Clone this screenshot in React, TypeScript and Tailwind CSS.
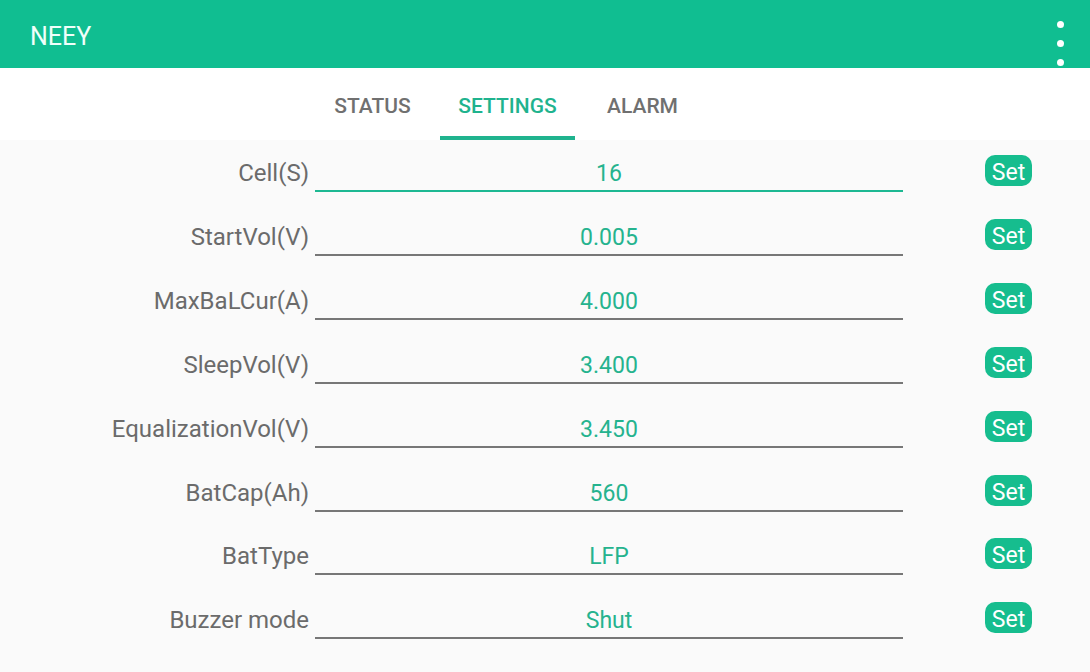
import React from 'react';

const rows = [
  { label: 'Cell(S)', value: '16', active: true, h: 'h-[64px]' },
  { label: 'StartVol(V)', value: '0.005', h: 'h-[64px]' },
  { label: 'MaxBaLCur(A)', value: '4.000', h: 'h-[64px]' },
  { label: 'SleepVol(V)', value: '3.400', h: 'h-[64px]' },
  { label: 'EqualizationVol(V)', value: '3.450', h: 'h-[64px]' },
  { label: 'BatCap(Ah)', value: '560', h: 'h-[64px]' },
  { label: 'BatType', value: 'LFP', h: 'h-[62px]' },
  { label: 'Buzzer mode', value: 'Shut', h: 'h-[66px]' },
];

const App: React.FC = () => {
  return (
    <div className="w-[1090px] h-[672px] overflow-hidden bg-[#fafafa] font-['Roboto',sans-serif]">
      {/* Toolbar */}
      <div className="h-[68px] bg-[#10be91] flex items-center justify-between pl-[30px] pr-[26px]">
        <span className="text-[25px] text-[#f0fffa] leading-none mt-[5px]">NEEY</span>
        <div className="flex flex-col gap-[12px] mt-[18px]">
          <span className="block w-[7px] h-[7px] rounded-full bg-white" />
          <span className="block w-[7px] h-[7px] rounded-full bg-white" />
          <span className="block w-[7px] h-[7px] rounded-full bg-white" />
        </div>
      </div>

      {/* Tabs */}
      <div className="h-[72px] bg-white flex pl-[305px]">
        <div className="w-[135px] flex items-center justify-center pt-[6px] text-[21px] font-medium text-[#707070]">STATUS</div>
        <div className="w-[135px] flex flex-col">
          <div className="flex-1 flex items-center justify-center pt-[10px] text-[21px] font-medium text-[#1fb38e]">SETTINGS</div>
          <div className="h-[4px] bg-[#1fb38e]" />
        </div>
        <div className="w-[135px] flex items-center justify-center pt-[6px] text-[21px] font-medium text-[#707070]">ALARM</div>
      </div>

      {/* Settings list */}
      <div className="pt-[1px]">
        {rows.map((r) => (
          <div key={r.label} className={`${r.h} flex items-center`}>
            <div className="w-[309px] text-right text-[24px] text-[#6b6b6b]">{r.label}</div>
            <div
              className={`ml-[6px] w-[588px] h-[38px] pt-[4px] flex items-center justify-center text-[23px] text-[#25b38e] ${
                r.active ? 'border-b-2 border-[#1db892]' : 'border-b-2 border-[#777777]'
              }`}
            >
              {r.value}
            </div>
            <div className="flex-1 flex justify-end pr-[58px]">
              <button className="w-[47px] h-[31px] -mt-[6px] pt-[4px] rounded-[10px] bg-[#16bd8e] text-white text-[23px] leading-none flex items-center justify-center">
                Set
              </button>
            </div>
          </div>
        ))}
      </div>
    </div>
  );
};

export default App;
